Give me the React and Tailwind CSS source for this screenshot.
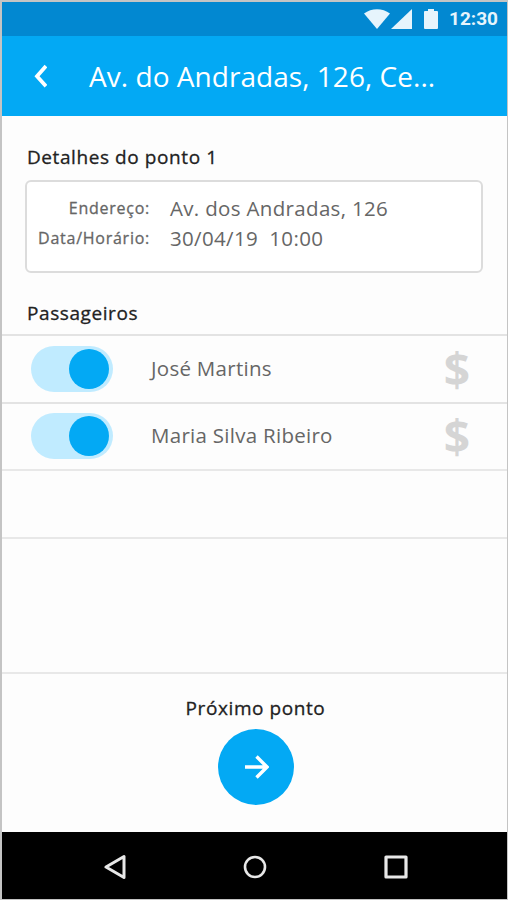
const passengers = [
    { id: 1, name: 'José Martins', onBoard: true },
    { id: 2, name: 'Maria Silva Ribeiro', onBoard: true },
];

const StatusBar = () => (
    <div className="h-[34px] shrink-0 bg-[#0288d1] flex items-center justify-end pr-[9px] text-[#e6f4fc]">
        <svg className="w-[26px] h-5" viewBox="0 0 26 20" fill="currentColor">
            <path d="M0 4.6C7.5-1.2 18.5-1.2 26 4.6L13 20Z" />
        </svg>
        <svg className="w-[21px] h-5 ml-[1px]" viewBox="0 0 21 20" fill="currentColor">
            <path d="M21 0V20H0Z" />
        </svg>
        <svg className="w-[14px] h-5 ml-3" viewBox="0 0 14 20" fill="currentColor">
            <path d="M4 0h6v2h3a1 1 0 0 1 1 1v16a1 1 0 0 1-1 1H1a1 1 0 0 1-1-1V3a1 1 0 0 1 1-1h3Z" />
        </svg>
        <span className="ml-[11px] -mt-[2px] font-['Roboto',sans-serif] text-[19px] leading-none font-bold">12:30</span>
    </div>
);

const Header = ({ title }) => (
    <header className="h-20 shrink-0 bg-[#03a9f4] flex items-center pl-8 text-white">
        <svg className="w-[13px] h-6" viewBox="0 0 13 24" fill="none" stroke="currentColor" strokeWidth="3.8">
            <path d="M12 2 3 12.2 12 22.2" />
        </svg>
        <h1 className="ml-[42px] text-[28px] leading-none tracking-[0.04px] whitespace-nowrap">{title}</h1>
    </header>
);

const SectionTitle = ({ children }) => (
    <h2 className="text-[19px] leading-7 tracking-[0.58px] text-[#222] [-webkit-text-stroke:0.3px_#222]">{children}</h2>
);

const Detail = ({ label, value }) => (
    <>
        <dt className="text-right text-[16px] tracking-[0.75px] text-[#666] [-webkit-text-stroke:0.3px_#666]">{label}</dt>
        <dd className="text-[20.5px] tracking-[0.33px] text-[#666] whitespace-pre">{value}</dd>
    </>
);

const Toggle = ({ checked }) => (
    <button
        role="switch"
        aria-checked={checked}
        className="w-[82px] h-[46px] rounded-full bg-[#c0ebff] flex items-center justify-end pr-[4px]"
    >
        <span className="w-10 h-10 rounded-full bg-[#03a9f4]" />
    </button>
);

const PassengerRow = ({ name, onBoard }) => (
    <li className="h-[67.5px] border-t-2 border-[#e3e3e3] flex items-center pl-[29px] pr-[37px]">
        <Toggle checked={onBoard} />
        <span className="ml-[38px] -mt-[1px] flex-1 text-[20.5px] tracking-[0.28px] text-[#666]">{name}</span>
        <span className="text-[46px] leading-none font-bold text-[#d5d5d5]">$</span>
    </li>
);

const NavBar = () => (
    <nav className="h-[67px] shrink-0 bg-black flex items-center pt-[2px] text-[#e8e8e8]">
        <svg className="w-[22px] h-[26px] ml-[102px]" viewBox="0 0 22 26" fill="none" stroke="currentColor" strokeWidth="3" strokeLinejoin="round">
            <path d="M20 2.5V23.5L2 13Z" />
        </svg>
        <svg className="w-6 h-6 ml-[117px]" viewBox="0 0 24 24" fill="none" stroke="currentColor" strokeWidth="2.6">
            <circle cx="12" cy="12" r="10" />
        </svg>
        <svg className="w-6 h-6 ml-[117px]" viewBox="0 0 24 24" fill="none" stroke="currentColor" strokeWidth="3.2" strokeLinejoin="round">
            <rect x="2" y="2" width="20" height="20" />
        </svg>
    </nav>
);

export default function App() {
    return (
        <div className="w-[508px] h-[900px] flex flex-col border-t-2 border-l-2 border-r border-b border-[#c4c4c4] bg-[#fdfdfd] font-['Open_Sans',sans-serif] overflow-hidden">
            <StatusBar />
            <Header title="Av. do Andradas, 126, Ce..." />

            <main className="flex-1 flex flex-col">
                <section className="h-[218px] shrink-0 pt-[27px] pl-[23px] pr-6">
                    <div className="pl-[2px]">
                        <SectionTitle>Detalhes do ponto 1</SectionTitle>
                    </div>
                    <dl className="mt-[9px] h-[93px] rounded-md border-2 border-[#dcdcdc] bg-white pt-[11px] grid grid-cols-[123px_1fr] auto-rows-[30px] gap-x-5 items-center">
                        <Detail label="Endereço:" value="Av. dos Andradas, 126" />
                        <Detail label="Data/Horário:" value="30/04/19  10:00" />
                    </dl>
                    <div className="mt-[26px] pl-[2px]">
                        <SectionTitle>Passageiros</SectionTitle>
                    </div>
                </section>

                <ul className="shrink-0">
                    {passengers.map(p => (
                        <PassengerRow key={p.id} name={p.name} onBoard={p.onBoard} />
                    ))}
                    <li className="h-[67.5px] border-t-2 border-[#e8e8e8]" />
                    <li className="h-[135px] border-t-2 border-[#e8e8e8]" />
                </ul>

                <section className="flex-1 border-t-2 border-[#e8e8e8] flex flex-col items-center pt-5 pl-[2px]">
                    <SectionTitle>Próximo ponto</SectionTitle>
                    <button className="mt-[7px] w-[76px] h-[76px] rounded-full bg-[#03a9f4] text-white flex items-center justify-center pl-[2px]">
                        <svg className="w-6 h-6" viewBox="0 0 24 24" fill="none" stroke="currentColor" strokeWidth="3.4">
                            <path d="M0 12H22M11.5 1.5 22 12 11.5 22.5" />
                        </svg>
                    </button>
                </section>
            </main>

            <NavBar />
        </div>
    );
}
